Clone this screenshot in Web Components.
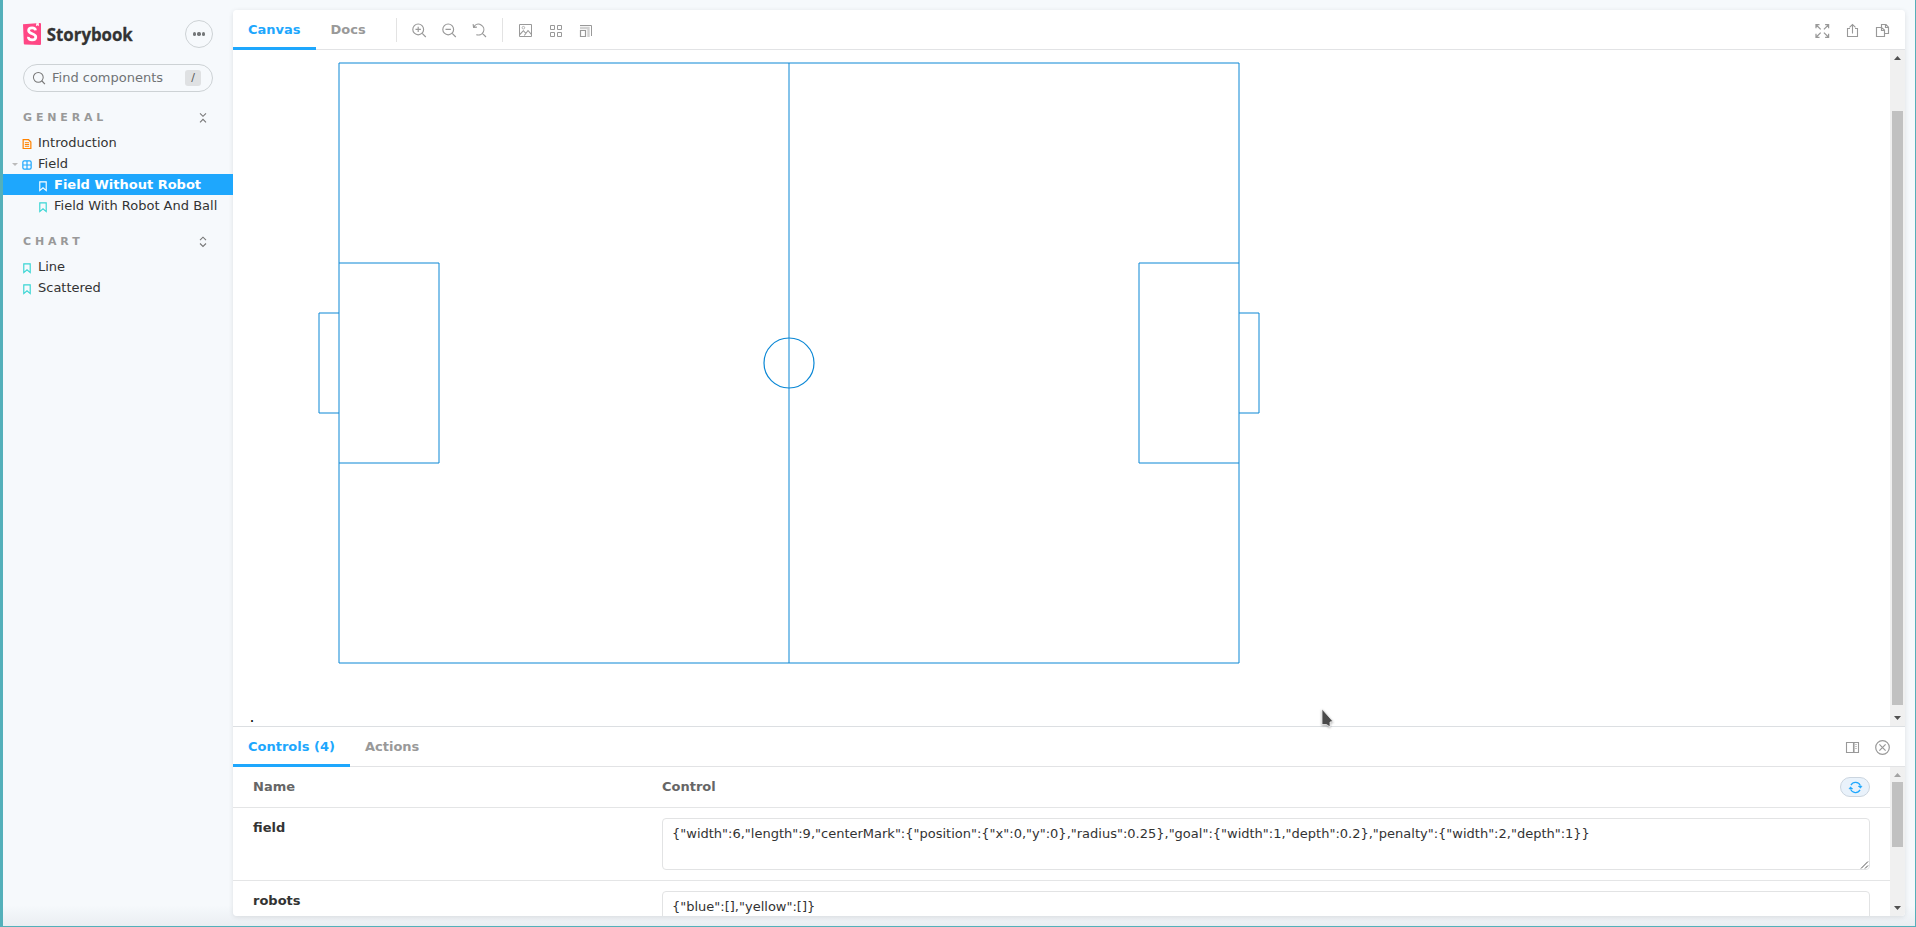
<!DOCTYPE html>
<html lang="en">
<head>
<meta charset="utf-8">
<title>Storybook</title>
<style>
html,body{margin:0;height:100%;overflow:hidden}
body{font:13px/18px "DejaVu Sans",sans-serif;color:#333;background:#f6f9fc}
</style>
</head>
<body>
<sb-app></sb-app>
<script>
function define(name, render) {
  customElements.define(name, class extends HTMLElement {
    connectedCallback() {
      if (this.shadowRoot) return;
      this.attachShadow({mode: 'open'}).innerHTML = render(this);
    }
  });
}

/* Stroked icons on a 14 x 14 grid */
const ICONS = {
  zoomin: '<g transform="translate(.2 -.6)" stroke-width="1.15"><circle cx="6" cy="6" r="5.4"/><path d="M10 10l3.600 3.600M3.300 6h5.400M6 3.300v5.400"/></g>',
  zoomout: '<g transform="translate(.2 -.6)" stroke-width="1.15"><circle cx="6" cy="6" r="5.4"/><path d="M10 10l3.600 3.600M3.300 6h5.400"/></g>',
  reset: '<g transform="translate(.2 -.6)" stroke-width="1.15"><path d="M1.700 3.300A5.400 5.400 0 1 1 4.200 11.200M10.200 10l3.600 3.600M.9.700l.5 3.300 3.300-.3"/></g>',
  photo: '<g transform="translate(1 0)"><path d="M.5.5h12v12H.5z"/><path d="M.8 10.500l3.600-3.800 2.600 2.800M5.300 11.500l3.700-5 3.400 3.800" stroke-width="1.100"/><circle cx="4.400" cy="3.700" r="1.300" stroke-width=".7"/></g>',
  grid: '<path d="M2.500 1.500h4v4h-4zM9.500 1.500h4v4h-4zM2.500 8.500h4v4h-4zM9.500 8.500h4v4h-4z"/>',
  measure: '<path d="M2.500 6.500h5v6h-5z" stroke-width="1.200"/><path d="M2 1.500h11.500V12"/><path d="M2 4h8.500v9" stroke-width="2.400" opacity=".45"/>',
  expand: '<g transform="translate(.3 0)" stroke-width="1.250"><path d="M.7 4.200V.7h3.500M9.800.7h3.500v3.500M.7 9.800v3.500h3.500M13.300 9.800v3.500H9.800M1 1l4.400 4.400M13 1L8.600 5.400M1 13l4.400-4.400M13 13L8.600 8.600"/></g>',
  share: '<path d="M5 4.500H2.500v8h10v-8H10M7.500 9.500V.5M4.500 3.300L7.500.5l3 2.800" stroke-width="1.100"/>',
  copy: '<path d="M1.500 3.500h5L9.500 6v6.500h-8zM6.500 3V.5H11l2.500 2.700v6.300H10M10.500.5v3h3M6.500 3.500v3h3" stroke-width="1.150"/>',
  side: '<path d="M1.500 1.500h12v10h-12zM8.500 1.500v10" stroke-width="1.100"/><path d="M10 3.500h2M10 5.500h2M10 7.500h2M9.500 2v9" opacity=".55"/>',
  close: '<g transform="translate(.5 -.5)" stroke-width="1.200"><circle cx="7" cy="7" r="6.800"/><path d="M3.900 3.900l6.200 6.200M10.100 3.900L3.900 10.100"/></g>',
  sync: '<path d="M2.100 4.400A5.600 5.600 0 0 1 12.200 5M11.900 9.600A5.600 5.600 0 0 1 1.800 9" stroke-width="1.300"/><path d="M9.800 5.500h4.300l-1.700 2.300zM-.1 8.500h4.300L1.600 6.200z" fill="currentColor" stroke-width=".5"/>',
  search: '<circle cx="6.200" cy="6.200" r="5.700" stroke-width="1.200"/><path d="M10.200 10.200l3.700 3.900" stroke-width="1.300"/>',
  doc: '<path d="M1.600 1h7.600l3.200 3.200v9.100H1.600z" stroke-width="1.700"/><path d="M4 5.200h6M4 7.700h6M4 10.200h6" stroke-width="1.400"/>',
  component: '<rect x="1.200" y="1.200" width="11.600" height="11.600" rx="2" stroke-width="1.700"/><path d="M7 1.500v11M1.500 7h11" stroke-width="1.600"/>',
  bookmark: '<path d="M2.500 1.200h9v12.200L7 9.600l-4.500 3.800z" stroke-width="1.600"/>',
  collapse: '<path d="M4 2.300l3 3 3-3M4 11.300l3-3 3 3" stroke-width="1.100"/>',
  open: '<path d="M4 5.200l3-3 3 3M4 8.500l3 3 3-3" stroke-width="1.100"/>'
};
define('sb-icon', el => `<style>
:host{display:block;flex:none;width:${el.getAttribute('size') || 14}px;height:${el.getAttribute('size') || 14}px}
svg{display:block;width:100%;height:100%;overflow:visible}
</style><svg viewBox="0 0 14 14" fill="none" stroke="currentColor" stroke-width="1">${ICONS[el.getAttribute('name')]}</svg>`);

define('sb-brand', () => `<style>
:host{display:flex;justify-content:space-between;height:28px;align-items:center}
.menu{width:26px;height:26px;border:1px solid #cdd2d5;border-radius:50%;display:flex;align-items:center;justify-content:center;gap:1px}
i{width:3.3px;height:3.3px;border-radius:50%;background:#747779}
svg{display:block;overflow:visible}
</style>
<svg width="120" height="28" viewBox="0 -2 120 28">
<path d="M0 2.300l17-1.200q1 0 1 1v20q0 1-1 1L1.800 22.500q-1 0-1-1z" fill="#ff4785"/>
<path d="M13.200 1.200l2.600-.2.1 3.200-1.300-1-1.500 1z" fill="#fff"/>
<path d="M12.500 8.300C12.300 6.600 11 5.900 9.100 5.900c-2.200 0-3.500.9-3.500 2.600 0 3.900 7.200 2.800 7.200 6.500 0 1.900-1.500 2.900-3.700 2.900-2.400 0-3.800-1-3.700-3" fill="none" stroke="#fff" stroke-width="2.700"/>
<text x="23.800" y="18.500" font-family="'Open Sans',sans-serif" font-weight="700" font-size="17" fill="#333" stroke="#333" stroke-width=".3" stroke-linejoin="round" textLength="86" lengthAdjust="spacingAndGlyphs">Storybook</text></svg>
<div class="menu"><i></i><i></i><i></i></div>`);

define('sb-search', () => `<style>
:host{display:flex;align-items:center;box-sizing:border-box;height:28px;border:1px solid #cdd2d5;border-radius:14px;padding:0 11px 0 9px;color:#707375}
span{margin-left:7px;flex:1;color:#707375}
sb-icon{color:#777}
kbd{width:16px;height:16px;border-radius:3px;background:#dfe1e3;font:11px/16px "DejaVu Sans",sans-serif;text-align:center;color:#555}
</style><sb-icon name="search" size="12"></sb-icon><span>Find components</span><kbd>/</kbd>`);

define('sb-heading', el => `<style>
:host{display:flex;align-items:center;justify-content:space-between;height:18px;padding:0 3px 0 20px;margin-right:20px;font-size:11px;font-weight:700;letter-spacing:3.85px;color:#999}
sb-icon{color:#777}
</style><slot></slot><sb-icon name="${el.getAttribute('icon')}"></sb-icon>`);

const TONES = {doc: '#ff8300', component: '#1ea7fd', bookmark: '#37d5d3'};
define('sb-item', el => `<style>
:host{display:flex;height:21px;align-items:center;padding-left:${el.hasAttribute('nested') ? 35 : 19}px;line-height:21px;white-space:nowrap;position:relative}
:host([selected]){background:#1ea7fd;color:#fff;font-weight:700}
sb-icon{color:${el.hasAttribute('selected') ? '#fff' : TONES[el.getAttribute('icon')]};margin:2px 6px 0 0}
span{margin-top:-1px}
.arrow{position:absolute;left:9px;top:10px;border:3px solid transparent;border-top:3px solid #bbb;border-bottom:0}
</style>${el.hasAttribute('expanded') ? '<i class="arrow"></i>' : ''}<sb-icon name="${el.getAttribute('icon')}" size="10"></sb-icon><span><slot></slot></span>`);

define('sb-sidebar', () => `<style>
:host{display:block;box-sizing:border-box;width:230px;padding-top:20px}
.top{padding:0 20px}
sb-search{margin-top:16px}
sb-heading{margin-top:17px}
.list{padding-top:5px}
</style>
<div class="top"><sb-brand></sb-brand><sb-search></sb-search></div>
<sb-heading icon="collapse">GENERAL</sb-heading>
<div class="list"><sb-item icon="doc">Introduction</sb-item>
<sb-item icon="component" expanded>Field</sb-item>
<sb-item icon="bookmark" nested selected>Field Without Robot</sb-item>
<sb-item icon="bookmark" nested>Field With Robot And Ball</sb-item></div>
<sb-heading icon="open">CHART</sb-heading>
<div class="list"><sb-item icon="bookmark">Line</sb-item>
<sb-item icon="bookmark">Scattered</sb-item></div>`);

define('sb-tab', () => `<style>
:host{display:block;box-sizing:border-box;height:40px;padding:1px 15px 0;line-height:38px;font-size:13px;font-weight:700;color:#999;border-bottom:3px solid transparent;white-space:nowrap}
:host([active]){color:#1ea7fd;border-color:#1ea7fd}
</style><slot></slot>`);

define('sb-bar', () => `<style>
:host{display:flex;justify-content:space-between;box-sizing:border-box;height:40px;flex:none;box-shadow:inset 0 -1px #e2e3e5;color:#999}
div{display:flex;height:40px}
.tools{align-items:center}
</style><div><slot></slot></div><div class="tools"><slot name="tools"></slot></div>`);

define('sb-scroll', el => `<style>
:host{display:flex;flex-direction:column;align-items:center;width:15px;flex:none;background:#f0f0f0}
.a{width:15px;height:15px;flex:none;display:block}
.gap{height:${el.getAttribute('offset')}px;flex:none}
.thumb{width:11px;height:${el.getAttribute('length')}px;background:#c1c1c1;flex:none}
.fill{flex:1}
</style><svg class="a"><path d="M4 10L7.500 6 11 10z" fill="${el.hasAttribute('at-top') ? '#a3a3a3' : '#505050'}"/></svg>
<div class="gap"></div><div class="thumb"></div><div class="fill"></div>
<svg class="a"><path d="M4 5L7.500 9 11 5z" fill="#505050"/></svg>`);

define('soccer-field', () => `<style>:host{display:block}svg{display:block;overflow:visible}</style>
<svg width="940" height="602" viewBox="-20 -1 940 602" fill="none" stroke="#0a87d5" stroke-width="1">
<path d="M0 0H900M0 600H900"/><path d="M0 0V600M900 0V600M450 0V600"/>
<path d="M0 200H100M0 400H100M800 200H900M800 400H900"/><path d="M100 200V400M800 200V400"/>
<path d="M-20 250H0M-20 350H0M900 250H920M900 350H920"/><path d="M-20 250V350M920 250V350"/>
<circle cx="450" cy="300" r="25" stroke-width="1.200"/></svg>`);

define('sb-row', () => `<style>
:host{display:grid;grid-template-columns:409px 1fr;box-sizing:border-box;height:73px;padding:10px 20px 0;border-bottom:1px solid #e4e5e6;font-weight:700}
.name{line-height:20px}
.box{box-sizing:border-box;height:52px;border:1px solid #e2e3e4;border-radius:4px;padding:5px 9px;font-weight:400;line-height:20px;position:relative;white-space:nowrap}
svg{position:absolute;right:0;bottom:0}
</style><div class="name"><slot name="name"></slot></div><div class="box"><slot></slot><svg width="9" height="9"><path d="M1 8.500L8 1.500M5 8.500L8 5.500" stroke="#555" stroke-width="1"/></svg></div>`);

define('sb-controls', () => `<style>
:host{display:flex;flex:1;min-height:0;overflow:hidden}
.table{flex:1;min-width:0}
.head{display:grid;grid-template-columns:409px 1fr 30px;align-items:center;height:40px;padding:0 20px;border-bottom:1px solid #e4e5e6;font-weight:700;color:#666}
.sync{display:flex;box-sizing:border-box;width:30px;height:20px;border:1px solid #cbd5df;border-radius:10px;background:#e9f2fb;align-items:center;justify-content:center;color:#1ea7fd}
</style><div class="table"><div class="head"><span>Name</span><span>Control</span><span class="sync"><sb-icon name="sync" size="13"></sb-icon></span></div>
<sb-row><span slot="name">field</span>{"width":6,"length":9,"centerMark":{"position":{"x":0,"y":0},"radius":0.25},"goal":{"width":1,"depth":0.2},"penalty":{"width":2,"depth":1}}</sb-row>
<sb-row><span slot="name">robots</span>{"blue":[],"yellow":[]}</sb-row></div>
<sb-scroll offset="0" length="65" at-top></sb-scroll>`);

define('sb-app', () => `<style>
:host{display:flex;box-sizing:border-box;width:1916px;height:927px;border:solid #54b0ba;border-width:0 1px 1px 3px;background:linear-gradient(#f6f9fc 0,#f6f9fc 905px,#eaeef2 926px);position:relative}
.shadow{height:906px;margin-top:10px;border-radius:4px;box-shadow:0 1px 5px rgba(0,0,0,.1)}
main{display:flex;flex-direction:column;width:1672px;height:906px;background:#fff;border-radius:4px;overflow:hidden}
.preview{display:flex;height:676px;flex:none}
.canvas{flex:1;padding:12px 0 0 86px}
.dot{font:16px/20px "Liberation Serif",serif;color:#000;margin:43px 0 0 -69px}
.sep{width:1px;height:24px;background:#e3e3e3;margin:8px 15px 0 15px}
.sep.two{margin-left:16px}
.icons{display:flex;gap:16px;padding-top:14px}
.right{display:flex;gap:16px;margin-right:16px;padding-top:1px}
.lower{border-top:1px solid #dcdfe2;height:41px}
.cursor{position:absolute;left:1316px;top:707px;filter:drop-shadow(0 1px 1px rgba(0,0,0,.35))}
</style>
<sb-sidebar></sb-sidebar>
<div class="shadow"><main>
<sb-bar><sb-tab active>Canvas</sb-tab><sb-tab>Docs</sb-tab><i class="sep"></i>
<div class="icons"><sb-icon name="zoomin"></sb-icon><sb-icon name="zoomout"></sb-icon><sb-icon name="reset"></sb-icon></div><i class="sep two"></i>
<div class="icons"><sb-icon name="photo"></sb-icon><sb-icon name="grid"></sb-icon><sb-icon name="measure"></sb-icon></div>
<div slot="tools" class="right"><sb-icon name="expand"></sb-icon><sb-icon name="share"></sb-icon><sb-icon name="copy"></sb-icon></div></sb-bar>
<div class="preview"><div class="canvas"><soccer-field></soccer-field><div class="dot">.</div></div><sb-scroll offset="46" length="594"></sb-scroll></div>
<sb-bar class="lower"><sb-tab active>Controls (4)</sb-tab><sb-tab>Actions</sb-tab>
<div slot="tools" class="right"><sb-icon name="side"></sb-icon><sb-icon name="close"></sb-icon></div></sb-bar>
<sb-controls></sb-controls></main></div>
<svg class="cursor" width="20" height="24"><path d="M3 2l11 12.500-3 .5 0 5-3.500-2.500H3z" fill="#4a4a4a" stroke="#fff" stroke-width=".7"/></svg>`);
</script>
</body>
</html>
